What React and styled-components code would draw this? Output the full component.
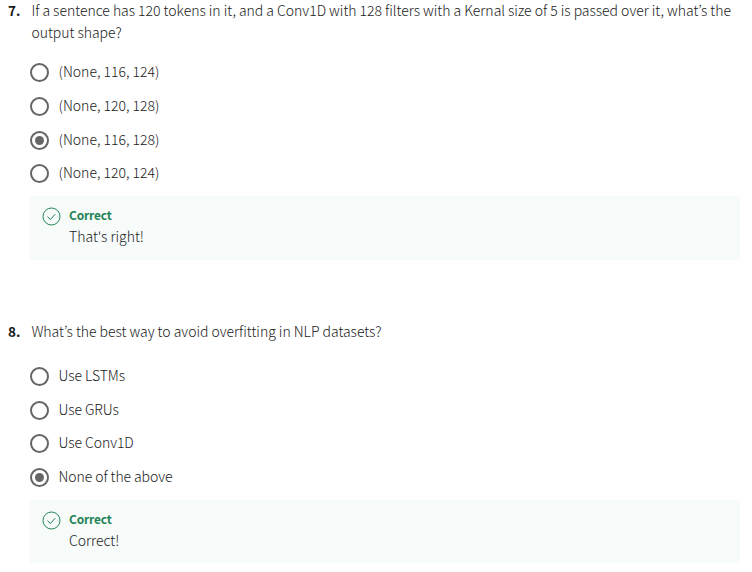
import React from 'react';
import styled, { createGlobalStyle } from 'styled-components';

const GlobalStyle = createGlobalStyle`
  * { box-sizing: border-box; }
  body {
    margin: 0;
    background: #fff;
    color: #1a1a1a;
    font-family: "Noto Sans CJK KR", "Open Sans", sans-serif;
    font-size: 14px;
    font-weight: 300;
    line-height: 22px;
    overflow: hidden;
  }
`;

const Page = styled.main`
  width: 752px;
  height: 572px;
  overflow: hidden;
`;

const Question = styled.section`
  display: grid;
  grid-template-columns: 23px 710px;
  padding-left: 8px;
  height: 321px;
`;

const Number = styled.span`
  font-weight: 700;
  font-size: 13.5px;
  line-height: 20px;
  letter-spacing: 0.1px;
`;

const Body = styled.div`
  display: flex;
  flex-direction: column;
`;

const Prompt = styled.div`
  height: ${(p) => p.$height}px;
  padding-left: 0.4px;
  white-space: nowrap;
`;

const PromptLine = styled.div`
  height: 22px;
  line-height: 20px;
  letter-spacing: -0.025px;
`;

const Options = styled.div`
  display: flex;
  flex-direction: column;
  gap: 11.7px;
`;

const Option = styled.label`
  display: flex;
  align-items: flex-start;
  height: 22px;
  gap: 9.5px;
  margin-left: -1px;
`;

const OptionText = styled.span`
  height: 22px;
  line-height: 20px;
  letter-spacing: ${(p) => p.$spacing}px;
`;

const Radio = styled.span`
  display: flex;
  align-items: center;
  justify-content: center;
  width: 19px;
  height: 19px;
  margin-top: 2px;
  border: 2px solid #666;
  border-radius: 50%;

  &::after {
    content: "";
    width: 9px;
    height: 9px;
    border-radius: 50%;
    background: ${(p) => (p.$checked ? '#666' : 'transparent')};
  }
`;

const Feedback = styled.div`
  display: flex;
  gap: 8px;
  width: 710px;
  height: ${(p) => p.$height}px;
  margin: 11.7px 0 0 -1px;
  padding: 9px 12px;
  background: #f7fbfa;
`;

const CheckIcon = styled.svg`
  width: 19px;
  height: 19px;
  margin-top: 2px;
  fill: none;
  stroke: #1f8354;
`;

const Verdict = styled.div`
  height: 21px;
  color: #1f8354;
  font-size: 12px;
  font-weight: 700;
  line-height: 20px;
  letter-spacing: -0.2px;
`;

const Message = styled.div`
  line-height: 20px;
`;

const questions = [
  {
    number: '7.',
    lines: [
      'If a sentence has 120 tokens in it, and a Conv1D with 128 filters with a Kernal size of 5 is passed over it, what’s the',
      'output shape?',
    ],
    promptHeight: 61.3,
    options: ['(None, 116, 124)', '(None, 120, 128)', '(None, 116, 128)', '(None, 120, 124)'],
    optionSpacing: 0,
    selected: 2,
    message: "That's right!",
    boxHeight: 64,
  },
  {
    number: '8.',
    lines: ['What’s the best way to avoid overfitting in NLP datasets?'],
    promptHeight: 44,
    options: ['Use LSTMs', 'Use GRUs', 'Use Conv1D', 'None of the above'],
    optionSpacing: -0.08,
    selected: 3,
    message: 'Correct!',
    boxHeight: 63,
  },
];

export default function App() {
  return (
    <Page>
      <GlobalStyle />
      {questions.map((q) => (
        <Question key={q.number}>
          <Number>{q.number}</Number>
          <Body>
            <Prompt $height={q.promptHeight}>
              {q.lines.map((line) => (
                <PromptLine key={line}>{line}</PromptLine>
              ))}
            </Prompt>
            <Options>
              {q.options.map((label, i) => (
                <Option key={label}>
                  <Radio $checked={i === q.selected} />
                  <OptionText $spacing={q.optionSpacing}>{label}</OptionText>
                </Option>
              ))}
            </Options>
            <Feedback $height={q.boxHeight}>
              <CheckIcon viewBox="0 0 19 19">
                <circle cx="9.5" cy="9.5" r="8.5" />
                <path d="M5.5 9.7l2.9 2.8 4.8-5.3" />
              </CheckIcon>
              <div>
                <Verdict>Correct</Verdict>
                <Message>{q.message}</Message>
              </div>
            </Feedback>
          </Body>
        </Question>
      ))}
    </Page>
  );
}
